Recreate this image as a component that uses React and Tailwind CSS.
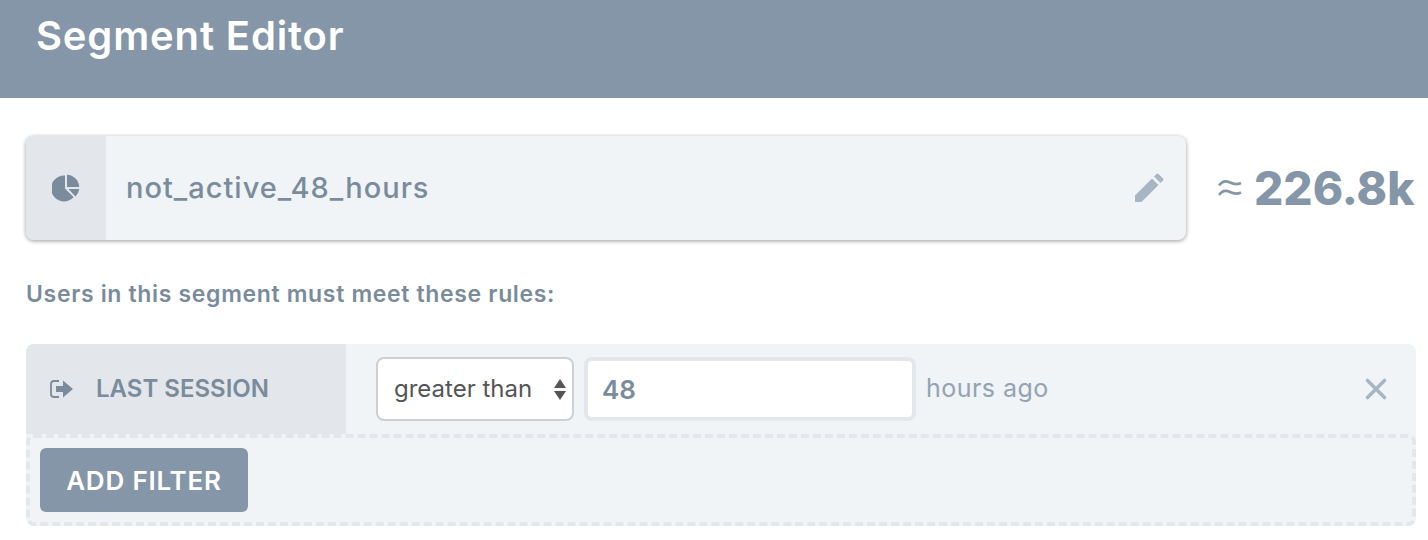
import { X } from 'lucide-react';

function PieIcon() {
  return (
    <svg width="28" height="28" viewBox="0 0 28 28" fill="#7a8b9c">
      <path d="M13 1.500v13l8.600 8.800A13 13 0 1 1 13 1.500z" />
      <path d="M15 .8a12.800 12.800 0 0 1 12.200 12.200H15z" />
      <path d="M16.400 15h10.900a13 13 0 0 1-3.900 7.500z" />
    </svg>
  );
}

function PencilIcon() {
  return (
    <svg width="30" height="30" viewBox="0 0 30 30" fill="#a8b5c2">
      <path d="M1 22.500 18 5.500l6.500 6.500-17 17H1z" />
      <path d="M20 3.500 22.500 1a1.500 1.500 0 0 1 2 0l4.500 4.500a1.500 1.500 0 0 1 0 2L26.500 10z" />
    </svg>
  );
}

function SessionIcon() {
  return (
    <svg width="24" height="20" viewBox="0 0 24 20" fill="#7a8b9c">
      <path d="M9 2H4A3 3 0 0 0 1 5v10a3 3 0 0 0 3 3h5" fill="none" stroke="#7a8b9c" strokeWidth="1.800" />
      <path d="M6 7h7V1.500L23 10l-10 8.500V13H6z" />
    </svg>
  );
}

function ApproxIcon() {
  return (
    <svg width="24" height="18" viewBox="0 0 24 18" fill="none" stroke="#8596a8" strokeWidth="2.600">
      <path d="M1 6.500C4 2 8 1.500 12 3.500s7 2.500 11 .5" />
      <path d="M1 16c3-4.500 7-5 11-3s7 2.500 11 .5" />
    </svg>
  );
}

export default function App() {
  return (
    <div className="h-[540px] w-[1428px] overflow-hidden bg-white font-['Inter','Liberation_Sans',sans-serif]">
      <header className="h-[98px] bg-[#8596a8] pl-9 pt-[9px]">
        <h1 className="text-[40px] leading-[54px] font-semibold tracking-[0.85px] text-white">Segment Editor</h1>
      </header>

      <div className="pl-[26px] pr-3 pt-[38px]">
        {/* Segment name */}
        <div className="flex items-center">
          <div className="flex h-[104px] w-[1160px] items-stretch overflow-hidden rounded-lg bg-[#f0f4f7] shadow-[0_1px_4px_rgba(0,0,0,0.4)]">
            <div className="flex w-20 items-center justify-center bg-[#e3e7eb]">
              <PieIcon />
            </div>
            <div className="flex flex-1 items-center justify-between pl-5 pr-[22px]">
              <span className="text-[29px] font-medium tracking-[1px] text-[#7a8b9c]">not_active_48_hours</span>
              <PencilIcon />
            </div>
          </div>
          <div className="ml-8 flex items-center gap-3">
            <ApproxIcon />
            <span className="text-[46px] leading-none font-extrabold whitespace-nowrap text-[#8596a8]">226.8k</span>
          </div>
        </div>

        <p className="mt-[38px] text-[23px] leading-8 font-semibold tracking-[0.66px] text-[#7a8b9c]">Users in this segment must meet these rules:</p>

        {/* Filter rows */}
        <div className="mt-[34px] w-[1390px] overflow-hidden rounded-lg bg-[#f0f4f7]">
          <div className="flex h-[90px] items-center">
            <div className="flex h-full w-80 items-center gap-[22px] bg-[#e3e7eb] pl-6">
              <SessionIcon />
              <span className="text-[24px] font-semibold text-[#7a8b9c]">LAST SESSION</span>
            </div>
            <div className="ml-[30px] flex h-[64px] w-[198px] items-center justify-between rounded-lg border-2 border-[#cdcfd2] bg-white pl-4 pr-1.5">
              <span className="text-[24px] text-[#555]">greater than</span>
              <span className="flex flex-col gap-[3px]">
                <span className="h-0 w-0 border-x-[6px] border-b-[9px] border-x-transparent border-b-[#555]" />
                <span className="h-0 w-0 border-x-[6px] border-t-[9px] border-x-transparent border-t-[#555]" />
              </span>
            </div>
            <div className="ml-[10px] flex h-[64px] w-[332px] items-center rounded-lg border-4 border-[#e3e7eb] bg-white pl-3.5">
              <span className="text-[26px] font-semibold text-[#7a8b9c]">48</span>
            </div>
            <span className="ml-[10px] text-[25px] tracking-[0.47px] text-[#94a3b2]">hours ago</span>
            <X className="ml-auto mr-[23px] text-[#a8b5c2]" size={34} strokeWidth={2.500} />
          </div>
          <div className="h-[92px] rounded-lg border-4 border-dashed border-[#e3e7eb] p-2.5">
            <button type="button" className="h-16 w-52 rounded-md bg-[#8596a8] text-[26px] font-semibold tracking-[0.8px] text-white">
              ADD FILTER
            </button>
          </div>
        </div>
      </div>
    </div>
  );
}
